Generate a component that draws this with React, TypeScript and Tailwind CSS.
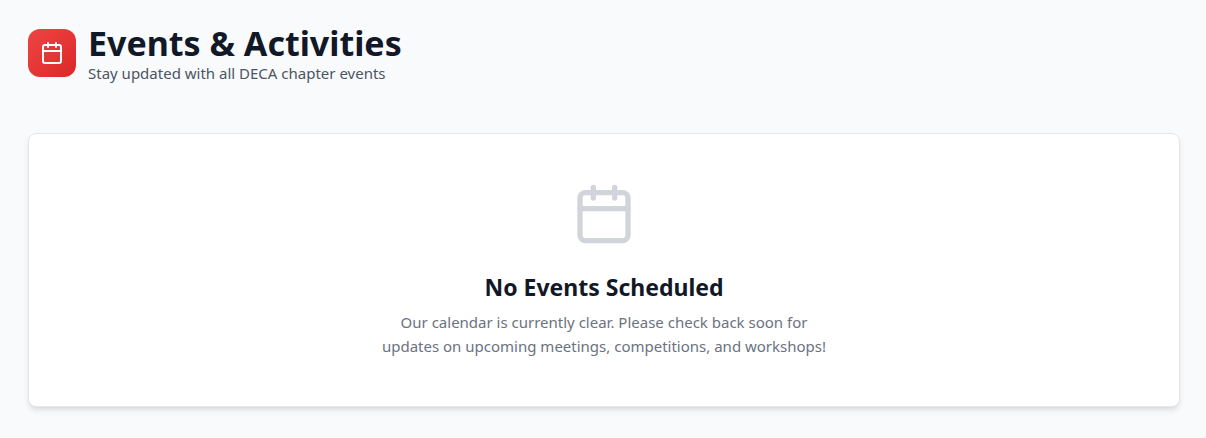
import React from "react";
import { Calendar } from "lucide-react";

export default function App() {
  return (
    <main className="min-h-screen bg-[#f9fafb] pt-[23px] pr-[26px] pb-6 pl-7 font-['Noto_Sans','Open_Sans',sans-serif]">
      <header className="mb-[50px] flex items-center gap-3">
        <div className="flex size-12 items-center justify-center rounded-xl bg-linear-to-br from-[#ef4444] to-[#dc2626]">
          <Calendar className="size-6 text-white" aria-hidden="true" />
        </div>
        <div>
          <h1 className="text-[34px] leading-10 font-bold text-[#111827]">Events &amp; Activities</h1>
          <p className="text-[15px] leading-5 text-[#4b5563]">Stay updated with all DECA chapter events</p>
        </div>
      </header>
      <section className="rounded-lg border border-[#e5e7eb] bg-white p-12 text-center shadow-md">
        <Calendar className="mx-auto mb-6 size-16 text-[#d1d5db]" aria-hidden="true" />
        <h2 className="mb-1.5 text-[23px] leading-[34px] font-bold text-[#111827]">No Events Scheduled</h2>
        <p className="mx-auto max-w-md text-[15px] leading-6 text-[#6b7280]">
          Our calendar is currently clear. Please check back soon for updates on upcoming meetings, competitions, and workshops!
        </p>
      </section>
    </main>
  );
}
